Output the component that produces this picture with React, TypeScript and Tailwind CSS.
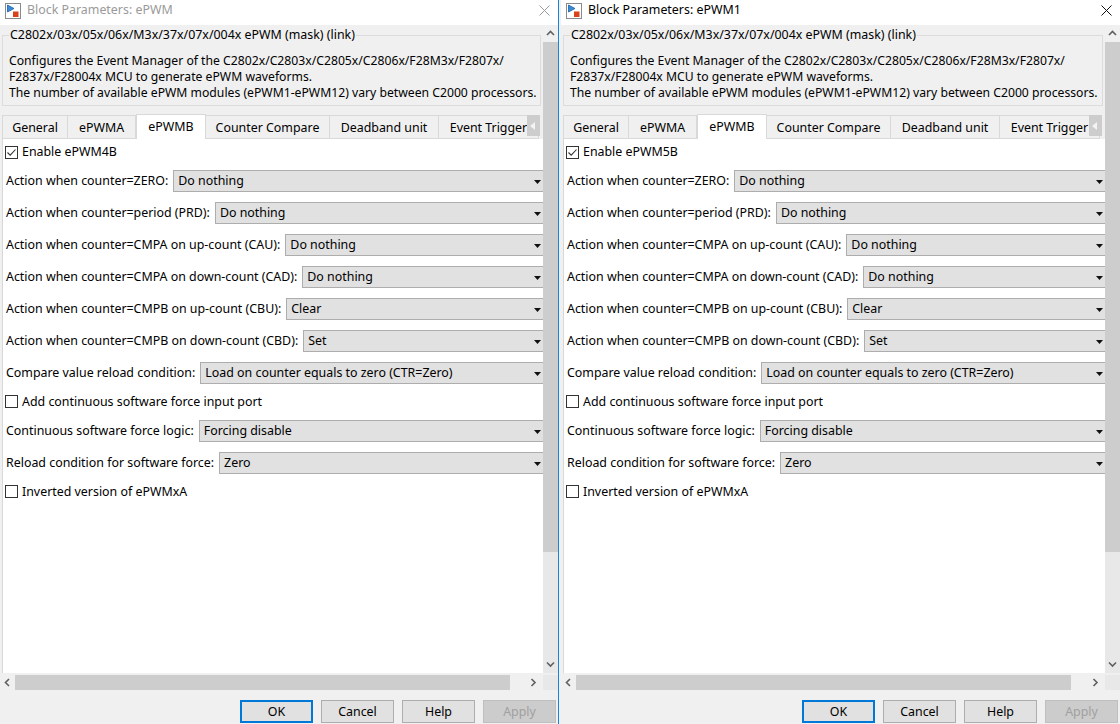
import React from "react";

const rowsTop: [string, string][] = [
  ["Action when counter=ZERO:", "Do nothing"],
  ["Action when counter=period (PRD):", "Do nothing"],
  ["Action when counter=CMPA on up-count (CAU):", "Do nothing"],
  ["Action when counter=CMPA on down-count (CAD):", "Do nothing"],
  ["Action when counter=CMPB on up-count (CBU):", "Clear"],
  ["Action when counter=CMPB on down-count (CBD):", "Set"],
  ["Compare value reload condition:", "Load on counter equals to zero (CTR=Zero)"],
];

const rowsBottom: [string, string][] = [
  ["Continuous software force logic:", "Forcing disable"],
  ["Reload condition for software force:", "Zero"],
];

const tabs = [
  { label: "General", w: "w-[66px]" },
  { label: "ePWMA", w: "w-[68px]" },
  { label: "ePWMB", w: "w-[70px]", selected: true },
  { label: "Counter Compare", w: "w-[124px]" },
  { label: "Deadband unit", w: "w-[109px]" },
  { label: "Event Trigger", w: "w-[100px]" },
];

function BlockIcon() {
  return (
    <svg width="16" height="16" viewBox="0 0 16 16">
      <rect x="0.5" y="0.5" width="15" height="15" fill="#fff" stroke="#8a8a8a" />
      <path d="M2.5 2 L9 5.5 L2.5 9 Z" fill="#3b8ad8" stroke="#1d5fa6" strokeWidth="0.8" />
      <rect x="8" y="8.5" width="5.5" height="5.5" fill="#d8431b" />
    </svg>
  );
}

function CloseIcon({ active }: { active: boolean }) {
  return (
    <svg width="11" height="11" viewBox="0 0 11 11">
      <path d="M0.5 0.5 L10.5 10.5 M10.5 0.5 L0.5 10.5" stroke={active ? "#111" : "#9a9a9a"} strokeWidth="1" />
    </svg>
  );
}

function Checkbox({ checked, label }: { checked: boolean; label: string }) {
  return (
    <div className="flex items-center pl-[2px]">
      <div className="flex h-[13px] w-[13px] items-center justify-center border border-[#333333] bg-white">
        {checked && (
          <svg width="11" height="11" viewBox="0 0 11 11">
            <path d="M1.5 5.5 L4.2 8.2 L9.5 2.5" fill="none" stroke="#333" strokeWidth="1.1" />
          </svg>
        )}
      </div>
      <span className="ml-[4px] whitespace-nowrap">{label}</span>
    </div>
  );
}

function Dropdown({ value }: { value: string }) {
  return (
    <div className="relative ml-[5px] mr-[-4px] flex h-[22px] min-w-0 flex-1 items-center border border-[#adadad] bg-[#e1e1e1] pl-[4px]">
      <span className="whitespace-nowrap">{value}</span>
      <svg className="absolute right-[5px] top-[9px]" width="7" height="4" viewBox="0 0 7 4">
        <path d="M0 0 L7 0 L3.5 4 Z" fill="#111" />
      </svg>
    </div>
  );
}

function Row({ label, value }: { label: string; value: string }) {
  return (
    <div className="flex h-[32px] items-center pl-[3px]">
      <span className="whitespace-nowrap">{label}</span>
      <Dropdown value={value} />
    </div>
  );
}

function Chevron({ dir }: { dir: "up" | "down" | "left" | "right" }) {
  const d =
    dir === "up"
      ? "M1 5 L4.5 1.5 L8 5"
      : dir === "down"
      ? "M1 1.5 L4.5 5 L8 1.5"
      : dir === "left"
      ? "M5 1 L1.5 4.5 L5 8"
      : "M1.5 1 L5 4.5 L1.5 8";
  const horiz = dir === "left" || dir === "right";
  return (
    <svg width={horiz ? 7 : 9} height={horiz ? 9 : 7} viewBox={horiz ? "0 0 7 9" : "0 0 9 7"}>
      <path d={d} fill="none" stroke="#606060" strokeWidth="1.6" />
    </svg>
  );
}

function Dialog({ title, active, enableLabel }: { title: string; active: boolean; enableLabel: string }) {
  return (
    <div className="flex h-[724px] min-w-0 flex-1 flex-col bg-[#f0f0f0]">
      {/* title bar */}
      <div className="flex h-[25px] shrink-0 items-center bg-white pb-[4px] pl-[5px]">
        <BlockIcon />
        <span className={`ml-[6px] whitespace-nowrap ${active ? "text-black" : "text-[#9a9a9a]"}`}>{title}</span>
        <div className="ml-auto mr-[8px] flex">
          <CloseIcon active={active} />
        </div>
      </div>

      <div className="flex h-[648px] shrink-0">
        <div className="flex min-w-0 flex-1 flex-col overflow-hidden">
          {/* description group */}
          <fieldset className="ml-[2px] mr-[2px] mt-[3px] min-w-0 border border-[#dcdcdc] px-[6px] pb-[4px]">
            <legend className="px-[1px] leading-[14px] whitespace-nowrap">
              C2802x/03x/05x/06x/M3x/37x/07x/004x ePWM (mask) (link)
            </legend>
            <div className="pt-[11px] text-[12.2px] leading-[16px] whitespace-nowrap">
              <div>Configures the Event Manager of the C2802x/C2803x/C2805x/C2806x/F28M3x/F2807x/</div>
              <div>F2837x/F28004x MCU to generate ePWM waveforms.</div>
              <div>The number of available ePWM modules (ePWM1-ePWM12) vary between C2000 processors.</div>
            </div>
          </fieldset>

          {/* tabs */}
          <div className="relative ml-[2px] mt-[7px] flex h-[26px] shrink-0 items-end overflow-hidden">
            {tabs.map((t, i) =>
              t.selected ? (
                <div
                  key={t.label}
                  className={`${t.w} relative z-10 flex h-[25px] shrink-0 items-center justify-center border-l border-r border-t border-[#d9d9d9] bg-white pt-[1px]`}
                >
                  {t.label}
                </div>
              ) : (
                <div
                  key={t.label}
                  className={`${t.w} flex h-[24px] shrink-0 items-center justify-center border-b border-r border-t border-[#d9d9d9] pt-[2px] ${
                    i === 0 ? "border-l" : ""
                  } whitespace-nowrap`}
                >
                  {t.label}
                </div>
              )
            )}
            <div className="absolute right-[3px] top-[2px] z-20 flex h-[21px] w-[13px] items-center bg-[#cdcdcd] pl-[3px]">
              <svg width="5" height="8" viewBox="0 0 5 8">
                <path d="M5 0 L0 4 L5 8 Z" fill="#f4f4f4" />
              </svg>
            </div>
          </div>

          {/* parameter panel */}
          <div className="ml-[2px] flex-1 overflow-hidden border-l border-[#d9d9d9] bg-white pt-[1px]">
            <div className="flex h-[25px] items-center">
              <Checkbox checked label={enableLabel} />
            </div>
            {rowsTop.map(([l, v]) => (
              <Row key={l} label={l} value={v} />
            ))}
            <div className="flex h-[26px] items-center">
              <Checkbox checked={false} label="Add continuous software force input port" />
            </div>
            {rowsBottom.map(([l, v]) => (
              <Row key={l} label={l} value={v} />
            ))}
            <div className="flex h-[26px] items-center">
              <Checkbox checked={false} label="Inverted version of ePWMxA" />
            </div>
          </div>
        </div>

        {/* vertical scrollbar */}
        <div className="flex w-[15px] shrink-0 flex-col items-center bg-[#f0f0f0]">
          <div className="flex h-[17px] w-full items-center justify-center">
            <Chevron dir="up" />
          </div>
          <div className="h-[510px] w-full bg-[#cdcdcd]" />
          <div className="w-full flex-1 bg-[#e8e8e8]" />
          <div className="flex h-[17px] w-full items-center justify-center bg-[#e8e8e8]">
            <Chevron dir="down" />
          </div>
        </div>
      </div>

      {/* horizontal scrollbar */}
      <div className="mt-[2px] flex h-[15px] shrink-0">
        <div className="flex w-[15px] items-center justify-center">
          <Chevron dir="left" />
        </div>
        <div className="w-[495px] bg-[#cdcdcd]" />
        <div className="flex flex-1 items-center justify-end pr-[6px]">
          <Chevron dir="right" />
        </div>
        <div className="w-[15px] bg-[#e8e8e8]" />
      </div>

      {/* buttons */}
      <div className="flex flex-1 items-start justify-end gap-[8px] pr-[2px] pt-[10px]">
        <button className="h-[23px] w-[73px] border-2 border-[#0078d7] bg-[#e1e1e1] pt-[1px] text-black">OK</button>
        <button className="h-[23px] w-[73px] border border-[#adadad] bg-[#e1e1e1] pt-[1px] text-black">Cancel</button>
        <button className="h-[23px] w-[73px] border border-[#adadad] bg-[#e1e1e1] pt-[1px] text-black">Help</button>
        <button className="h-[23px] w-[73px] border border-[#bfbfbf] bg-[#cccccc] pt-[1px] text-[#a0a0a0]">Apply</button>
      </div>
    </div>
  );
}

export default function App() {
  return (
    <div className="flex h-[724px] w-[1120px] overflow-hidden bg-[#f0f0f0] font-['Noto_Sans',sans-serif] text-[12.4px] text-black">
      <div className="flex w-[558px] shrink-0">
        <Dialog title="Block Parameters: ePWM" active={false} enableLabel="Enable ePWM4B" />
      </div>
      <div className="flex min-w-0 flex-1 border-l border-[#1883d7] pl-[2px]">
        <Dialog title="Block Parameters: ePWM1" active enableLabel="Enable ePWM5B" />
      </div>
    </div>
  );
}
